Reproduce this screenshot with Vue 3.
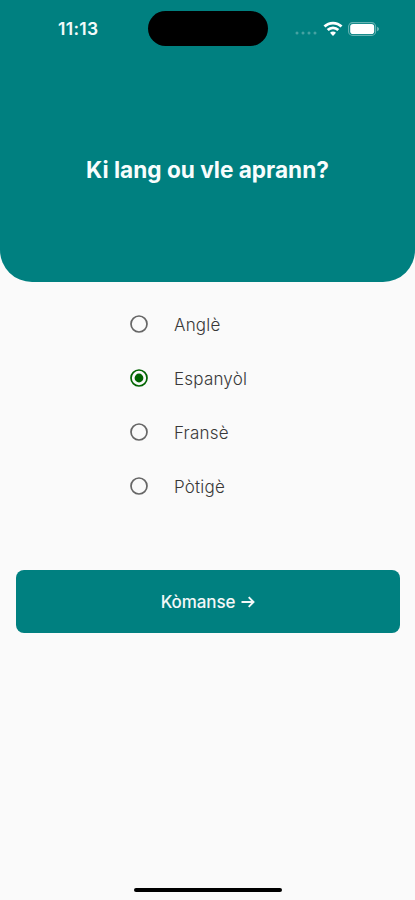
<script setup>
import { ref } from 'vue'

const languages = ['Anglè', 'Espanyòl', 'Fransè', 'Pòtigè']
const selected = ref('Espanyòl')
</script>

<template>
  <main class="screen">
    <header class="hero">
      <div class="status">
        <span class="time">11:13</span>
        <span class="island"></span>
        <div class="indicators">
          <svg class="signal" width="22" height="4" viewBox="0 0 22 4">
            <circle cx="2" cy="2" r="1.5" />
            <circle cx="8" cy="2" r="1.5" />
            <circle cx="14" cy="2" r="1.5" />
            <circle cx="20" cy="2" r="1.5" />
          </svg>
          <svg class="wifi" width="20" height="16" viewBox="0 0 20 16" fill="none" stroke="#fff" stroke-width="2.8">
            <path d="M1.5 5.6C6.2 .9 13.8 .9 18.5 5.6" />
            <path d="M4.7 9.1C7.7 6.2 12.3 6.2 15.3 9.1" />
            <path d="M10 15L7 11.8C8.7 10.1 11.3 10.1 13 11.8Z" fill="#fff" stroke="none" />
          </svg>
          <svg class="battery" width="32" height="14" viewBox="0 0 32 14">
            <rect x=".6" y=".6" width="27" height="12.8" rx="4" fill="none" stroke="#fff" stroke-opacity=".4" stroke-width="1.1" />
            <rect x="2.2" y="2" width="24" height="10" rx="2.8" fill="#fff" />
            <path d="M29.2 4.8C31.4 5.6 31.4 8.4 29.2 9.2Z" fill="#fff" fill-opacity=".5" />
          </svg>
        </div>
      </div>
      <h1 class="title">Ki lang ou vle aprann?</h1>
    </header>

    <div class="options" role="radiogroup">
      <div
        v-for="language in languages"
        :key="language"
        class="option"
        role="radio"
        :aria-checked="selected === language"
        @click="selected = language"
      >
        <svg class="radio" :class="{ checked: selected === language }" width="18" height="18" viewBox="0 0 18 18">
          <circle class="ring" cx="9" cy="9" r="8" />
          <circle v-if="selected === language" class="dot" cx="9" cy="9" r="4.4" />
        </svg>
        <span class="label">{{ language }}</span>
      </div>
    </div>

    <button class="start">
      <span>Kòmanse</span>
      <svg width="14" height="12" viewBox="0 0 14 12" fill="none" stroke="#f3f8f8" stroke-width="1.9">
        <path d="M.5 6H12.5M7.7 1.2L12.5 6L7.7 10.8" />
      </svg>
    </button>

    <div class="home"></div>
  </main>
</template>

<style>
body {
  margin: 0;
  background: #fafafa;
}
</style>

<style scoped>
.screen {
  display: flex;
  flex-direction: column;
  box-sizing: border-box;
  width: 100%;
  height: 900px;
  padding-bottom: 8px;
  background: #fafafa;
  font-family: Inter, "Liberation Sans", sans-serif;
}
.hero {
  display: flex;
  flex-direction: column;
  flex: none;
  height: 282px;
  border-radius: 0 0 32px 32px;
  background: #008080;
}
.status {
  display: grid;
  grid-template-columns: 148px 120px 1fr;
  align-items: center;
  height: 35px;
  padding-top: 11px;
}
.time {
  padding-left: 58px;
  color: #f2fafa;
  font-size: 17.5px;
  font-weight: 600;
  line-height: 20px;
  letter-spacing: 0.3px;
}
.island {
  height: 35px;
  border-radius: 18px;
  background: #000;
}
.indicators {
  display: flex;
  align-items: center;
  padding-left: 27px;
}
.signal {
  margin: 9px 6px 0 0;
  fill: #46a2a2;
}
.wifi {
  margin-right: 5px;
}
.title {
  margin: 109px 0 0;
  color: #f8fdfd;
  font-size: 22.6px;
  font-weight: 700;
  line-height: 30px;
  text-align: center;
}
.options {
  display: flex;
  flex-direction: column;
  padding: 15px 0 0 130px;
}
.option {
  display: flex;
  align-items: center;
  gap: 26px;
  height: 54px;
}
.ring {
  fill: none;
  stroke: #666;
  stroke-width: 1.7px;
}
.checked .ring {
  stroke: #006400;
}
.dot {
  fill: #006400;
}
.label {
  margin-top: 1px;
  color: #383838;
  font-size: 17px;
  font-weight: 300;
  line-height: 24px;
  letter-spacing: 0.2px;
}
.start {
  display: flex;
  align-items: center;
  justify-content: center;
  gap: 6px;
  height: 63px;
  margin: 57px 15px 0 16px;
  padding: 0;
  border: 0;
  border-radius: 8px;
  background: #008080;
  color: #f3f8f8;
  font: 500 17px/24px Inter, "Liberation Sans", sans-serif;
  letter-spacing: -0.1px;
}
.home {
  align-self: center;
  width: 148px;
  height: 4px;
  margin-top: auto;
  border-radius: 2px;
  background: #000;
}
</style>
